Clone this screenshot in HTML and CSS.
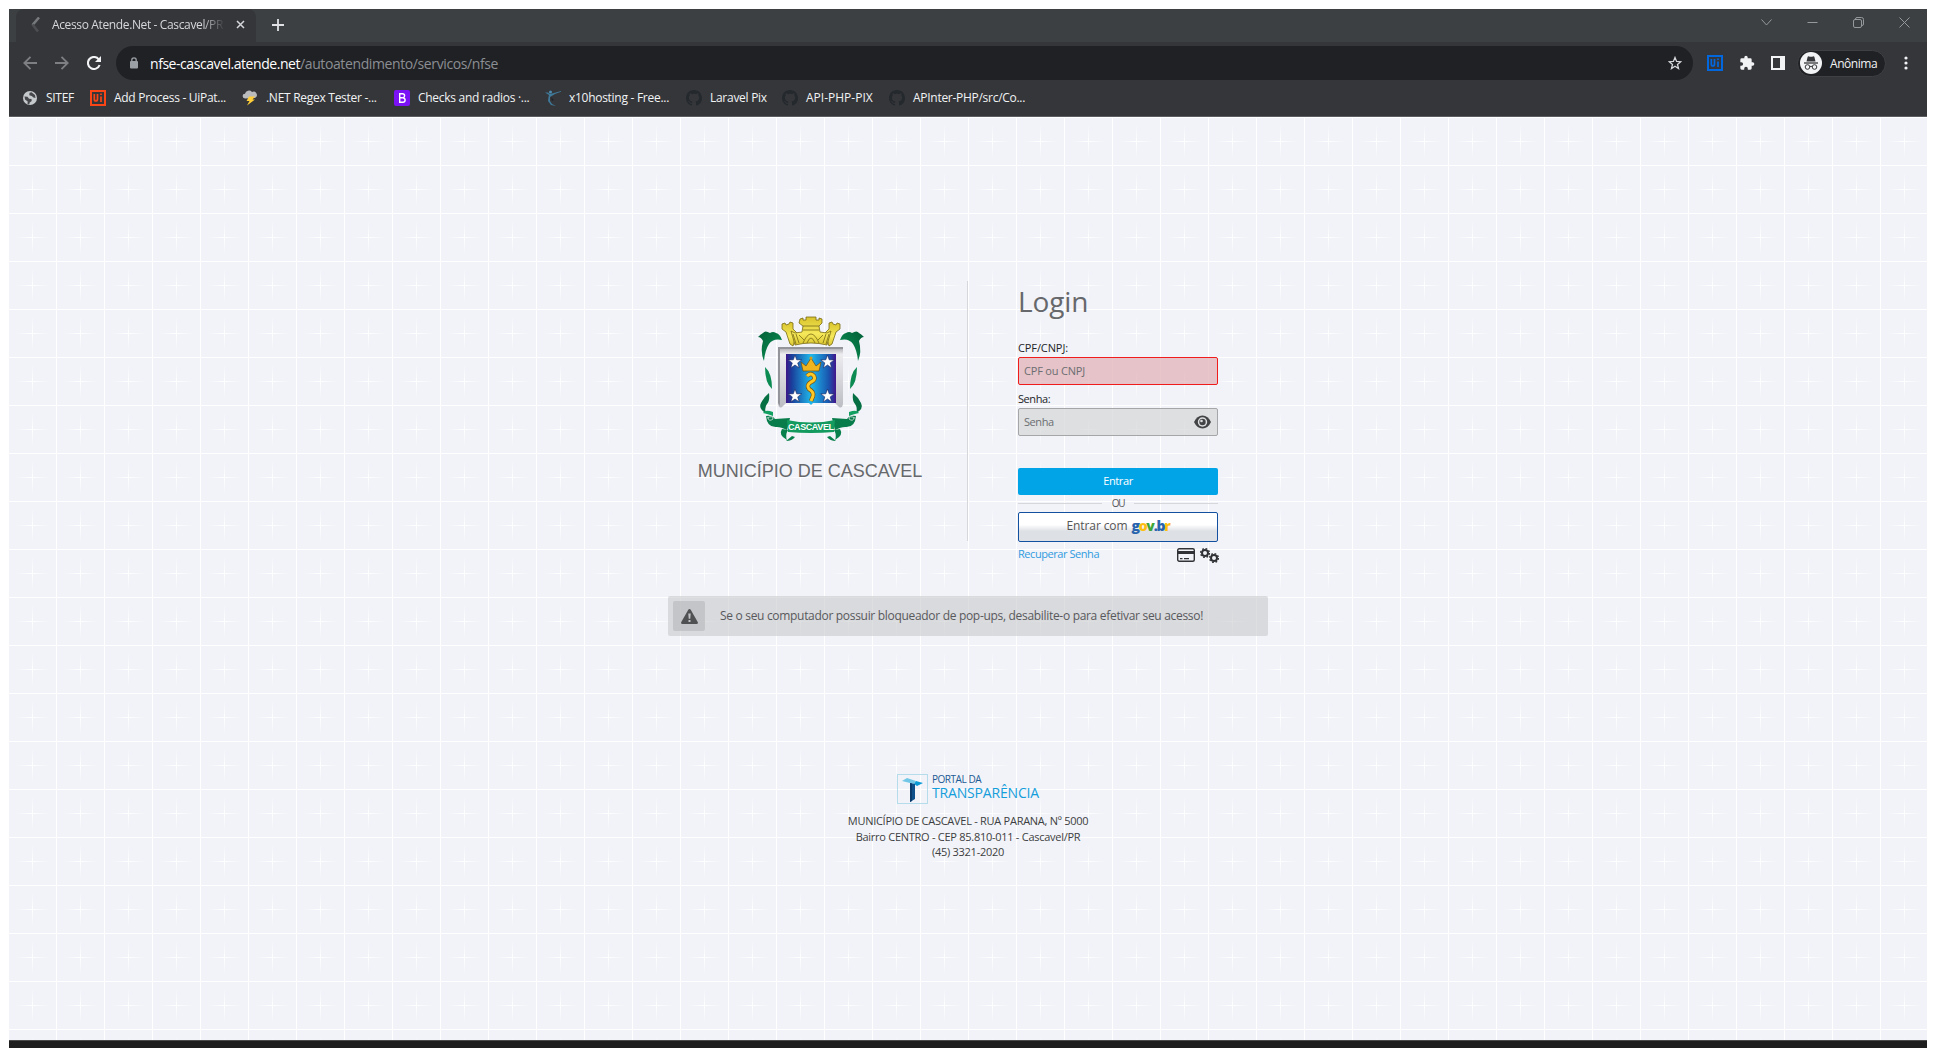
FILE: index.html
```html
<!DOCTYPE html>
<html lang="pt-BR">
<head>
<meta charset="utf-8">
<title>Acesso Atende.Net - Cascavel/PR</title>
<link rel="stylesheet" href="styles.css">
</head>
<body>
<div class="window">
  <div class="tabstrip">
    <div class="tab">
      <svg class="tab-icon" width="16" height="16" viewBox="0 0 16 16"><path d="M10 0.500L3.500 8" stroke="#777a7d" stroke-width="2.600"/><path d="M3.500 7.500L9 14.500" stroke="#4c4e51" stroke-width="2.600"/></svg>
      <span class="tab-title">Acesso Atende.Net - Cascavel/PR</span>
      <svg width="9" height="9" viewBox="0 0 9 9"><path d="M1 1l7 7M8 1L1 8" stroke="#d5d7da" stroke-width="1.500"/></svg>
    </div>
    <svg class="new-tab" width="12" height="12" viewBox="0 0 12 12"><path d="M6 0v12M0 6h12" stroke="#dfe1e4" stroke-width="1.800"/></svg>
    <div class="win-controls">
      <svg width="11" height="11" viewBox="0 0 11 11"><path d="M.5 2.500l5 5.500 5-5.500"/></svg>
      <svg width="11" height="11" viewBox="0 0 11 11"><path d="M.5 5.500h10"/></svg>
      <svg width="11" height="11" viewBox="0 0 11 11"><rect x=".5" y="2.500" width="8" height="8" rx="1.500"/><path d="M2.500 2.500V2Q2.500.5 4 .5h4.500q2 0 2 2V7q0 1.500-1.500 1.500"/></svg>
      <svg width="11" height="11" viewBox="0 0 11 11"><path d="M.5.5l10 10M10.500.5l-10 10"/></svg>
    </div>
  </div>
  <div class="toolbar">
    <svg width="14" height="14" viewBox="0 0 14 14" fill="none" stroke="#7d7f83" stroke-width="1.800"><path d="M14 7H1.500M7.500.8L1.300 7l6.200 6.200"/></svg>
    <svg width="14" height="14" viewBox="0 0 14 14" fill="none" stroke="#7d7f83" stroke-width="1.800"><path d="M0 7h12.500M6.500.8L12.700 7l-6.200 6.200"/></svg>
    <svg width="14" height="14" viewBox="0 0 14 14"><path d="M11.700 3.300A6 6 0 1 0 12.600 9" fill="none" stroke="#f1f3f4" stroke-width="2.100"/><path d="M14 0v6H8z" fill="#f1f3f4"/></svg>
    <div class="address">
      <svg width="8" height="12" viewBox="0 0 8 12"><rect y="4" width="8" height="7.500" rx="1" fill="#9aa0a6"/><path d="M1.800 4.500V3a2.200 2.200 0 0 1 4.400 0v1.500" fill="none" stroke="#9aa0a6" stroke-width="1.300"/></svg>
      <span class="url"><b>nfse-cascavel.atende.net</b><i>/autoatendimento/servicos/nfse</i></span>
      <svg class="star" width="14" height="14" viewBox="0 0 14 14"><path d="M7 1.500l1.600 3.900 4.100.3-3.200 2.700 1 4.100L7 10.300l-3.500 2.200 1-4.100L1.300 5.700l4.100-.3z" fill="none" stroke="#d5d8db" stroke-width="1.300"/></svg>
    </div>
    <div class="extensions">
      <svg width="16" height="16" viewBox="0 0 16 16"><rect x="1" y="1" width="14" height="14" fill="none" stroke="#0067df" stroke-width="2"/><path d="M4.300 4v5q0 2 1.600 2t1.600-2V4M11 6.500V12M11 3.500v1.600" fill="none" stroke="#0067df" stroke-width="1.700"/></svg>
      <svg width="16" height="16" viewBox="0 0 24 24"><path d="M20.500 11H19V7a2 2 0 0 0-2-2h-4V3.500a2.500 2.500 0 0 0-5 0V5H4a2 2 0 0 0-2 2v3.800h1.500a2.700 2.700 0 0 1 0 5.400H2V20a2 2 0 0 0 2 2h3.800v-1.500a2.700 2.700 0 0 1 5.400 0V22H17a2 2 0 0 0 2-2v-4h1.500a2.500 2.500 0 0 0 0-5z" fill="#f1f3f4"/></svg>
      <svg width="14" height="14" viewBox="0 0 14 14"><path d="M0 0h14v14H0zM2 2v10h7V2z" fill="#f1f3f4" fill-rule="evenodd"/></svg>
      <div class="profile">
        <svg width="22" height="22" viewBox="0 0 22 22"><circle cx="11" cy="11" r="11" fill="#f1f3f4"/><g fill="none" stroke="#35363a"><path d="M4 11h14" stroke-width="1.300"/><circle cx="7.500" cy="15" r="2.300"/><circle cx="14.500" cy="15" r="2.300"/><path d="M9.800 14.600q1.200-.7 2.400 0"/></g><path d="M6.500 9.500L7.600 5q.4-1 1.400-.6 2 .7 4 0 1-.4 1.400.6l1.100 4.500z" fill="#35363a"/></svg>
        <span>Anônima</span>
      </div>
      <svg width="4" height="14" viewBox="0 0 4 14" fill="#f1f3f4"><circle cx="2" cy="2" r="1.600"/><circle cx="2" cy="7" r="1.600"/><circle cx="2" cy="12" r="1.600"/></svg>
    </div>
  </div>
  <div class="bookmarks">
    <div class="bm"><svg width="16" height="16" viewBox="0 0 16 16"><circle cx="8" cy="8" r="7" fill="#c6c9cc"/><path d="M2.500 6.500l3 .3 1.500 2 2.500.3.200 2-2 1.500-.5 1.800-1.700-.4.200-2.500-2.700-2zM7.500 2.800l2-.6L13 5l.5 3-2-.6L9.700 6 7.300 5.300z" fill="#45474b"/></svg><span>SITEF</span></div>
    <div class="bm"><svg width="16" height="16" viewBox="0 0 16 16"><rect x="1" y="1" width="14" height="14" fill="none" stroke="#fa4616" stroke-width="2"/><path d="M4.300 4v5q0 2 1.600 2t1.600-2V4M11 6.500V12M11 3.500v1.600" fill="none" stroke="#fa4616" stroke-width="1.700"/></svg><span>Add Process - UiPat...</span></div>
    <div class="bm"><svg width="16" height="16" viewBox="0 0 16 16"><path d="M3 8.500a2.400 2.400 0 0 1 0-4.800A4 4 0 0 1 10 2a3.200 3.200 0 0 1 3 6z" fill="#b9bbbd"/><path d="M7 6.500h6L10.500 9.500H13L5 15.500 7.500 11H4.500z" fill="#ffce3a"/></svg><span>.NET Regex Tester -...</span></div>
    <div class="bm"><svg width="16" height="16" viewBox="0 0 16 16"><rect width="16" height="16" rx="2" fill="#7a12f5"/><path d="M5.700 3.700v8.600h3.100q2.300 0 2.300-2.300 0-1.900-2.300-2.100 1.800-.3 1.800-2.100 0-2.100-2.200-2.100zM5.700 7.800h3" fill="none" stroke="#fff" stroke-width="1.400"/></svg><span>Checks and radios ·...</span></div>
    <div class="bm"><svg width="16" height="16" viewBox="0 0 16 16" fill="none"><path d="M0 2.500h3l2 1.500 4-1 7-2v.8L10 4 7.500 5.500 5 7v4l2 3 4 2-5-1-3-4 .5-4L4 5z" fill="#3f7898"/><circle cx="5.500" cy="2" r="1.500" fill="#4c8bb0"/><path d="M6 7l3 3-2 1z" fill="#20242a"/></svg><span>x10hosting - Free...</span></div>
    <div class="bm"><svg width="16" height="16" viewBox="0 0 16 16"><use href="#octo"/></svg><span>Laravel Pix</span></div>
    <div class="bm wide"><svg width="16" height="16" viewBox="0 0 16 16"><use href="#octo"/></svg><span>API-PHP-PIX</span></div>
    <div class="bm"><svg width="16" height="16" viewBox="0 0 16 16"><path id="octo" d="M8 0C3.580 0 0 3.580 0 8c0 3.540 2.290 6.530 5.470 7.590.4.070.55-.17.55-.38 0-.19-.01-.82-.01-1.490-2.010.37-2.530-.49-2.690-.94-.09-.23-.48-.94-.82-1.130-.28-.15-.68-.52-.01-.53.63-.01 1.080.58 1.230.82.72 1.210 1.870.87 2.330.66.070-.52.28-.87.51-1.070-1.780-.2-3.640-.89-3.640-3.950 0-.87.31-1.590.82-2.150-.08-.2-.36-1.020.08-2.120 0 0 .67-.21 2.200.82.640-.18 1.320-.27 2-.27s1.360.09 2 .27c1.530-1.040 2.200-.82 2.200-.82.44 1.100.16 1.920.08 2.120.51.56.82 1.270.82 2.150 0 3.070-1.870 3.750-3.650 3.950.29.25.54.73.54 1.480 0 1.070-.01 1.930-.01 2.200 0 .21.15.46.55.38A8.010 8.010 0 0 0 16 8c0-4.420-3.580-8-8-8z" fill="#24292e"/></svg><span>APInter-PHP/src/Co...</span></div>
  </div>

  <main class="page">
    <div class="panel">
      <section class="city">
        <svg class="crest" width="106" height="128" viewBox="0 0 106 128">
          <defs>
            <linearGradient id="field"><stop offset="0" stop-color="#3d1688"/><stop offset=".12" stop-color="#19409c"/><stop offset=".5" stop-color="#20b8ea"/><stop offset=".85" stop-color="#1956b0"/><stop offset="1" stop-color="#42158b"/></linearGradient>
            <linearGradient id="silver" x2="0" y2="1"><stop offset="0" stop-color="#a3a3aa"/><stop offset=".12" stop-color="#ededf0"/><stop offset="1" stop-color="#bcbcc4"/></linearGradient>
            <linearGradient id="gold" x2="0" y2="1"><stop offset="0" stop-color="#d8c32b"/><stop offset=".6" stop-color="#f5e85a"/><stop offset="1" stop-color="#d9c530"/></linearGradient>
            <linearGradient id="leaf" x2="1" y2="1"><stop offset="0" stop-color="#035f38"/><stop offset="1" stop-color="#0a9456"/></linearGradient>
            <path id="estrela" d="M0-7l1.700 4.800 5 .1-4 3 1.500 5L0 3l-4.200 2.900 1.500-5-4-3 5-.1z" fill="#fff" stroke="#14205c" stroke-width=".6"/>
            <g id="ribbon">
              <path d="M0 21q3-3 5-4 2-3 7 0 3-2 6 0 4 1 6 7-9-2-13 4-4 6-5 17-4-9-1-20-2-4-5-4z" fill="url(#leaf)"/>
              <path d="M7 51q7 6 7 22-7-6-7-22z" fill="#0b8a52"/>
              <path d="M11 77q1 8-2 11-3 4-1 9-8-4-5-10 3-6 8-10z" fill="#067044"/>
              <path d="M5 97q2-4 10-1v4q-5-2-10-3z" fill="#12a062"/>
              <path d="M8 100q6-1 9 3l15-1-3 12q-6-3-10-3-10 1-11-11z" fill="#097c4b"/>
              <path d="M9 102q6-3 6 1-4 3-5-1" fill="none" stroke="#f2f3f7" stroke-width=".7"/>
              <path d="M24 113q-4 6 5 11-2-5 1-10zM28 125l6-5 3 1q-3 4-9 4z" fill="#08804b"/>
            </g>
          </defs>
          <g fill="url(#gold)" stroke="#786b14" stroke-width=".8">
            <path d="M24 8l3-1 1 2 3-1 1-2 3 1v6l4 4-4 13-3-2-4-12-4-3zM82 8l-3-1-1 2-3-1-1-2-3 1v6l-4 4 4 13 3-2 4-12 4-3z"/>
            <path d="M42 3l3-1v2h3V1h10v3h3V2l3 1v4l-3 3 1 6 7 1 4-2-4 14q-16-4-32 0l-4-14 4 2 7-1 1-6-4-3z"/>
            <path d="M45 27q8-18 16 0M49 27q4-10 8 0M38 28l-3-10M41 27l-3-9M68 28l3-10M65 27l3-9M45 10h16M45 14h16M41 19l5 5M65 19l-5 5" fill="none"/>
          </g>
          <path d="M20 31h65v57q-1 5-4 3l-4-4H28l-4 4q-3 2-4-3z" fill="url(#silver)"/>
          <path d="M20 31h65v2H22v57l-2-3z" fill="#94949b"/>
          <path d="M28 38h50v49H55l-2 2-2-2H28z" fill="url(#field)"/>
          <use href="#estrela" x="37" y="46"/><use href="#estrela" x="69.500" y="46"/><use href="#estrela" x="37" y="80"/><use href="#estrela" x="69.500" y="80"/>
          <path d="M43 46l5 4 5-8 5 8 5-4-2 9H45z" fill="#efb51e" stroke="#6f4b10" stroke-width=".7"/><circle cx="53" cy="42" r="1.500" fill="#d99a18"/>
          <path d="M49 60q4-4 7 0 2 4-3 6-5 3-2 7 5 3 4 7l-2 5" fill="none" stroke="#775216" stroke-width="4.400"/>
          <path d="M49 60q4-4 7 0 2 4-3 6-5 3-2 7 5 3 4 7l-2 5" fill="none" stroke="#ffc925" stroke-width="3"/>
          <use href="#ribbon"/><use href="#ribbon" transform="translate(106) scale(-1 1)"/>
          <path d="M29 104q24 5 48 0l-1 12q-23 2-46 0z" fill="#139a5e"/>
          <text x="53" y="114" text-anchor="middle" textLength="46" class="crest-text">CASCAVEL</text>
        </svg>
        <h2>MUNICÍPIO DE CASCAVEL</h2>
      </section>
      <form class="login">
        <h1>Login</h1>
        <label>CPF/CNPJ:</label>
        <div class="field invalid"><span>CPF ou CNPJ</span></div>
        <label class="tight">Senha:</label>
        <div class="field"><span class="tight">Senha</span>
          <svg width="17" height="14" viewBox="0 0 17 14"><path d="M0 7Q3 .5 8.500.5T17 7q-3 6.500-8.500 6.500T0 7z" fill="#424446"/><circle cx="8.500" cy="7" r="4.700" fill="#dedfe1"/><circle cx="8.500" cy="7" r="3.200" fill="#424446"/><circle cx="7.500" cy="6" r="1.300" fill="#dedfe1"/></svg>
        </div>
        <div class="enter">Entrar</div>
        <div class="or"><span>OU</span></div>
        <div class="gov"><span>Entrar com</span> <strong><em class="b">g</em><em class="y">o</em><em class="g">v</em><em class="b">.b</em><em class="y">r</em></strong></div>
        <div class="links"><span>Recuperar Senha</span>
          <svg width="18" height="14" viewBox="0 0 18 14"><rect x=".7" y=".7" width="16.600" height="12.600" rx="1.500" fill="none" stroke="#303235" stroke-width="1.400"/><path d="M1 3h16v3H1zM3 10h2.500v1.200H3zM7 10h5v1.200H7z" fill="#303235"/></svg>
          <svg width="19" height="15" viewBox="0 0 19 15" fill="none" stroke="#303235"><circle cx="5" cy="5" r="3" stroke-width="2"/><circle cx="5" cy="5" r="4.400" stroke-width="1.400" stroke-dasharray="1.700 1.755"/><circle cx="14" cy="10" r="3" stroke-width="2"/><circle cx="14" cy="10" r="4.400" stroke-width="1.400" stroke-dasharray="1.700 1.755"/></svg>
        </div>
      </form>
    </div>
    <div class="notice">
      <div class="notice-icon"><svg width="17" height="15" viewBox="0 0 17 15"><path d="M8.500 0q.8 0 1.200.7L17 13.500q0 1.500-1.500 1.500h-14Q0 15 0 13.500L7.300.7Q7.700 0 8.500 0z" fill="#505153"/><path d="M7.300 4.500h2.400l-.4 5.200H7.700zM7.500 11h2v2h-2z" fill="#c3c4c7"/></svg></div>
      <span>Se o seu computador possuir bloqueador de pop-ups, desabilite-o para efetivar seu acesso!</span>
    </div>
    <footer>
      <div class="portal">
        <svg width="31" height="30" viewBox="0 0 31 30"><rect x=".5" y=".5" width="30" height="29" fill="none" stroke="#b5dcea"/><path d="M5 7l5-3 9 3-2 3z" fill="#72c7e6"/><path d="M17 10l2-3 7 2-6 3z" fill="#0a9bd7"/><path d="M13 9l5 1v15l-5 3z" fill="#0d4f8b"/><path d="M13 9l2 .4V27l-2 1z" fill="#083a6c"/></svg>
        <div><div class="p1">PORTAL DA</div><div class="p2">TRANSPARÊNCIA</div></div>
      </div>
      <p>MUNICÍPIO DE CASCAVEL - RUA PARANA, Nº 5000</p>
      <p>Bairro CENTRO - CEP 85.810-011 - Cascavel/PR</p>
      <p>(45) 3321-2020</p>
    </footer>
  </main>
  <div class="bottom"></div>
</div>
</body>
</html>
```
FILE: styles.css
```css
* { box-sizing: border-box; }
body { margin: 0; background: #fff; font-family: "Open Sans", "Noto Sans", sans-serif; }
svg { display: block; flex: none; }
h1, h2, p { margin: 0; font-weight: 400; }
i, em { font-style: normal; }

.window { width: 1918px; height: 1039px; margin: 9px 0 0 9px; display: flex; flex-direction: column; }

.tabstrip { height: 33px; background: #3c4043; display: flex; padding-left: 7px; flex: none; }
.tab { width: 240px; border-radius: 8px 8px 0 0; background: #35363a; display: flex; align-items: center; padding: 0 11px 2px 13px; }
.tab-icon { margin-right: 7px; }
.tab-title { width: 174px; margin-right: 10px; white-space: nowrap; font-size: 12px; letter-spacing: -.366px; color: #d5d7da; mask-image: linear-gradient(90deg, #000 150px, transparent 173px); }
.new-tab { margin: 10px 0 0 16px; }
.win-controls { margin: 8px 17px 0 auto; display: flex; gap: 35px; }
.win-controls svg { fill: none; stroke: #96999c; }

.toolbar { height: 42px; flex: none; background: #35363a; display: flex; align-items: center; padding: 0 19px 0 14px; }
.toolbar > svg { margin-right: 18px; }
.address { width: 1577px; height: 34px; margin-left: -3px; border-radius: 17px; background: #202124; display: flex; align-items: center; padding: 0 11px 0 14px; }
.url { margin-left: 12px; font-size: 14px; letter-spacing: -.39px; color: #8b8e93; white-space: nowrap; }
.url b { font-weight: 400; color: #fff; letter-spacing: -.45px; }
.star { margin-left: auto; }
.extensions { display: flex; align-items: center; flex: 1; margin-left: 14px; }
.extensions > svg { margin-right: 16px; }
.extensions > svg:nth-child(3) { margin-right: 12px; }
.extensions > svg:last-child { margin: 0 0 0 auto; }
.profile { width: 89px; height: 27px; border-radius: 14px; background: #202124; border: 1px solid #3e4044; display: flex; align-items: center; gap: 8px; padding-left: 2px; color: #f1f3f4; font-size: 12px; letter-spacing: -.45px; }

.bookmarks { height: 33px; flex: none; background: #35363a; border-bottom: 1px solid #5b5d61; display: grid; grid-template-columns: 68px 152px 152px 151px 141px 96px 107px 150px; padding: 0 0 5px 13px; color: #f1f3f4; font-size: 12px; letter-spacing: -.28px; align-items: center; }
.bm { display: flex; gap: 8px; align-items: center; white-space: nowrap; }
.bm.wide { letter-spacing: 0; }

.page { height: 923px; flex: none; background: #f2f3f8 url("data:image/svg+xml,%3Csvg xmlns='http://www.w3.org/2000/svg' width='48' height='48'%3E%3Cdefs%3E%3ClinearGradient id='h'%3E%3Cstop stop-color='white' stop-opacity='0'/%3E%3Cstop offset='.5' stop-color='white'/%3E%3Cstop offset='1' stop-color='white' stop-opacity='0'/%3E%3C/linearGradient%3E%3ClinearGradient id='v' x2='0' y2='1'%3E%3Cstop stop-color='white' stop-opacity='0'/%3E%3Cstop offset='.5' stop-color='white'/%3E%3Cstop offset='1' stop-color='white' stop-opacity='0'/%3E%3C/linearGradient%3E%3C/defs%3E%3Cpath d='M47 0h1v48H0v-1h47z' fill='white'/%3E%3Crect x='7' y='23' width='33' height='1' fill='url(%23h)'/%3E%3Crect x='23' y='7' width='1' height='33' fill='url(%23v)'/%3E%3C/svg%3E") 0 1px; display: flex; flex-direction: column; align-items: center; padding-top: 164px; }
.panel { width: 600px; height: 260px; display: flex; }
.city { width: 300px; border-right: 1px solid #d6d7db; display: flex; flex-direction: column; align-items: center; padding: 35px 15px 0 0; }
.crest { margin-left: 2px; }
.crest-text { font: bold 9px "Liberation Sans", sans-serif; fill: #fff; }
h2 { font: 18px/20px "Liberation Sans", sans-serif; color: #66686b; margin-top: 17px; white-space: nowrap; }
.login { width: 200px; margin-left: 50px; color: #222427; font-size: 11px; }
h1 { font-size: 28px; line-height: 40px; height: 60px; letter-spacing: -.1px; color: #66686b; }
label { display: block; height: 16px; line-height: 14px; letter-spacing: -.1px; }
label.tight, .tight { letter-spacing: -.42px; }
.field { height: 28px; border: 1px solid #a5a6a8; border-radius: 2px; background: #d4d5d7b3; display: flex; align-items: center; justify-content: space-between; padding: 0 6px 1px 5px; color: #6c6e71; margin-bottom: 7px; letter-spacing: -.19px; }
.invalid { border-color: #f01c1c; background: #dfaeb3b3; }
.enter { height: 27px; margin-top: 32px; border-radius: 2px; background: #02a4e8; color: #fff; text-align: center; line-height: 26px; letter-spacing: -.4px; }
.or { height: 17px; display: flex; align-items: center; gap: 10px; font-size: 10px; letter-spacing: -1.2px; color: #55575a; padding-bottom: 1px; }
.or::before, .or::after { content: ""; height: 1px; flex: 1; background: #d6d7db; }
.gov { height: 30px; border: 1px solid #1351a0; border-radius: 2px; background: linear-gradient(#fff 42%, #dde0e4 65%); display: flex; align-items: center; justify-content: center; gap: 4px; font-size: 12px; color: #555; padding-bottom: 3px; letter-spacing: -.1px; }
.gov strong { font-size: 14px; font-weight: 800; letter-spacing: -1.27px; }
.b { color: #2864ae; } .y { color: #fdbe12; } .g { color: #3fa535; }
.links { display: flex; align-items: center; height: 26px; color: #2f9be0; letter-spacing: -.44px; margin-right: -1px; }
.links svg { margin-left: 5px; }
.links span { margin-right: auto; padding-bottom: 3px; }
.notice { width: 600px; height: 40px; margin-top: 55px; border-radius: 2px; background: #c8c9cb99; display: flex; align-items: center; padding-left: 5px; gap: 15px; font-size: 12px; letter-spacing: -.309px; color: #58595c; white-space: nowrap; }
.notice span { padding-bottom: 2px; }
.notice-icon { width: 32px; height: 30px; border-radius: 2px; background: #bcbdc0bb; display: grid; place-items: center; }
footer { margin-top: 138px; text-align: center; font-size: 11px; line-height: 15.500px; letter-spacing: -.27px; color: #3c3e41; }
.portal { display: flex; gap: 4px; justify-content: center; text-align: left; margin-bottom: 9px; white-space: nowrap; }
.p1 { font-size: 10px; line-height: 10px; letter-spacing: -.46px; color: #1b5a94; }
.p2 { font-size: 14px; line-height: 18px; letter-spacing: -.17px; color: #139ddb; }
.bottom { height: 8px; background: #1e1e1e; border-top: 1px solid #4a4b4d; }
```
